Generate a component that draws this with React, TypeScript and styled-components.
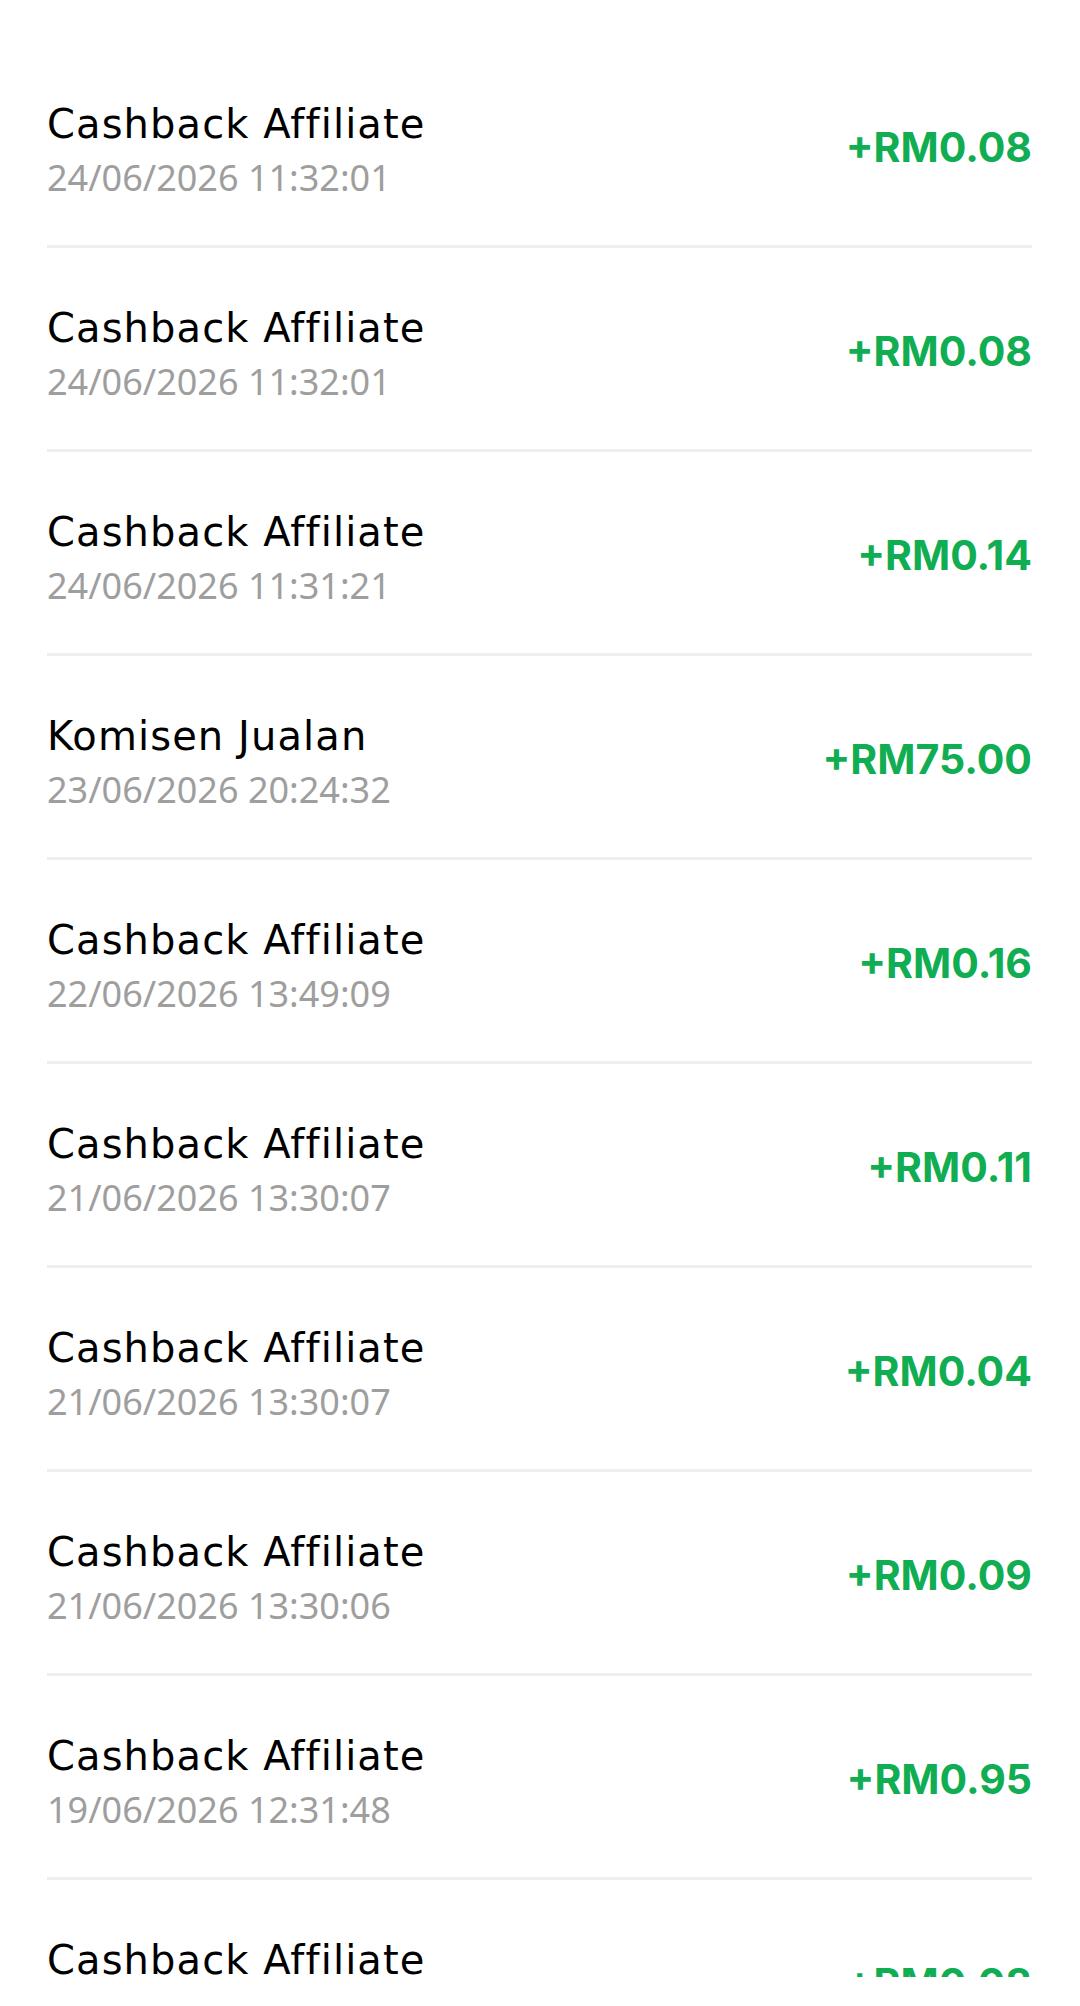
import React from 'react'
import styled, { createGlobalStyle } from 'styled-components'

type Entry = {
  title: string
  date: string
  amount: string
}

const entries: Entry[] = [
  { title: 'Cashback Affiliate', date: '24/06/2026 11:32:01', amount: '+RM0.08' },
  { title: 'Cashback Affiliate', date: '24/06/2026 11:32:01', amount: '+RM0.08' },
  { title: 'Cashback Affiliate', date: '24/06/2026 11:31:21', amount: '+RM0.14' },
  { title: 'Komisen Jualan', date: '23/06/2026 20:24:32', amount: '+RM75.00' },
  { title: 'Cashback Affiliate', date: '22/06/2026 13:49:09', amount: '+RM0.16' },
  { title: 'Cashback Affiliate', date: '21/06/2026 13:30:07', amount: '+RM0.11' },
  { title: 'Cashback Affiliate', date: '21/06/2026 13:30:07', amount: '+RM0.04' },
  { title: 'Cashback Affiliate', date: '21/06/2026 13:30:06', amount: '+RM0.09' },
  { title: 'Cashback Affiliate', date: '19/06/2026 12:31:48', amount: '+RM0.95' },
  { title: 'Cashback Affiliate', date: '19/06/2026 12:31:48', amount: '+RM0.08' },
]

const GlobalStyle = createGlobalStyle`
  html, body {
    margin: 0;
    padding: 0;
    background: #ffffff;
  }
  * {
    box-sizing: border-box;
  }
`

const App: React.FC = () => {
  return (
    <>
      <GlobalStyle />
      <StyledPage>
        <StyledList>
          {entries.map((entry, i) => (
            <StyledRow key={i}>
              <StyledInfo>
                <StyledTitle>{entry.title}</StyledTitle>
                <StyledDate>{entry.date}</StyledDate>
              </StyledInfo>
              <StyledAmount>{entry.amount}</StyledAmount>
            </StyledRow>
          ))}
        </StyledList>
      </StyledPage>
    </>
  )
}

const StyledPage = styled.div`
  width: 1080px;
  height: 2006px;
  overflow: hidden;
  background: #ffffff;
  padding: 44px 48px 0 47px;
`

// scroll viewport ends a little above the bottom of the screen
const StyledList = styled.div`
  display: flex;
  flex-direction: column;
  height: 1933px;
  overflow: hidden;
`

const StyledRow = styled.div`
  display: flex;
  align-items: center;
  justify-content: space-between;
  height: 204px;
  flex-shrink: 0;
  border-bottom: 3px solid #efefef;
`

const StyledInfo = styled.div`
  display: flex;
  flex-direction: column;
  padding-top: 10px;
`

const StyledTitle = styled.div`
  font-family: 'DejaVu Sans', sans-serif;
  font-size: 40px;
  letter-spacing: 1.1px;
  line-height: 56px;
  color: #000000;
`

const StyledDate = styled.div`
  font-family: 'Noto Sans', sans-serif;
  font-size: 36px;
  line-height: 52px;
  color: #9e9e9e;
`

const StyledAmount = styled.div`
  font-family: Inter, sans-serif;
  font-weight: 700;
  font-size: 41px;
  padding-top: 4px;
  color: #10ad52;
`

export default App
